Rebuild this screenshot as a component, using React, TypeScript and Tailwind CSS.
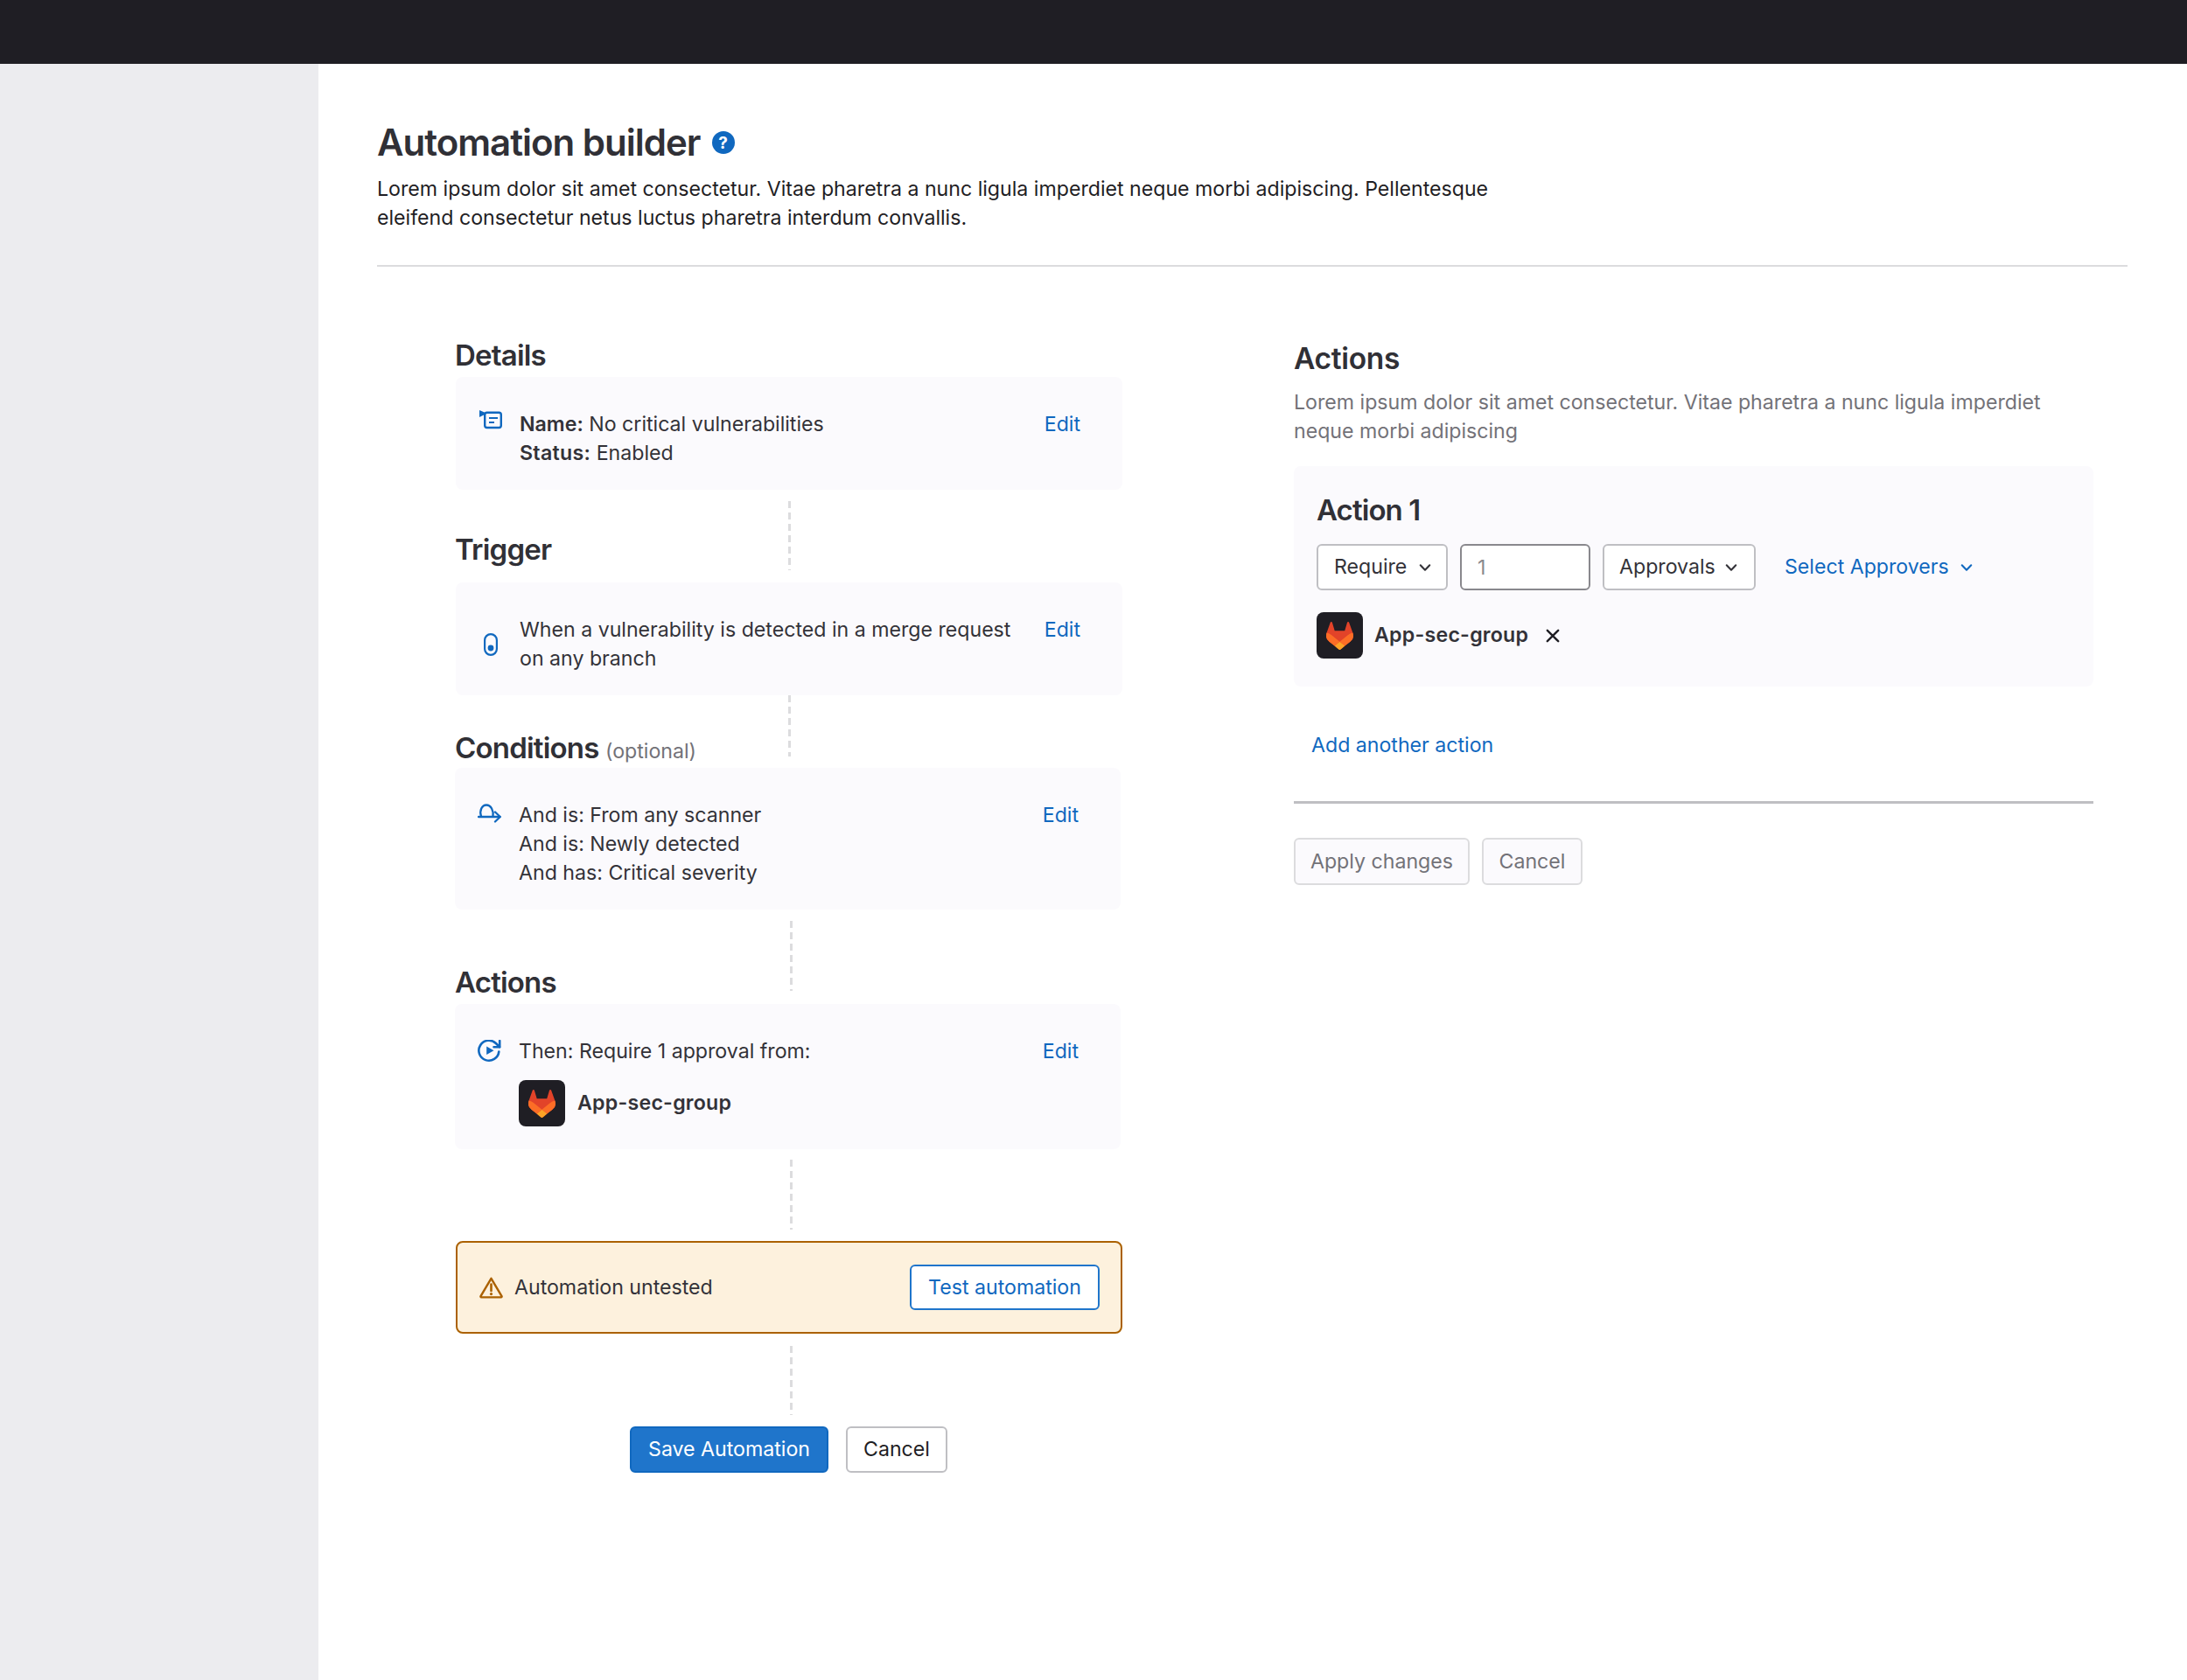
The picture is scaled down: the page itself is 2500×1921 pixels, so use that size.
import React from "react";

const BLUE = "#1068bf";

function Tanuki() {
  return (
    <svg viewBox="0 0 25 24" preserveAspectRatio="none" className="w-[31px] h-[32px]">
      <path fill="#E24329" d="m24.507 9.5-.034-.09L21.082.562a.896.896 0 0 0-1.694.091l-2.29 7.01H7.825L5.535.653a.898.898 0 0 0-1.694-.09L.451 9.411.416 9.5a6.297 6.297 0 0 0 2.09 7.278l.012.01.03.022 5.16 3.867 2.56 1.935 1.554 1.176a1.051 1.051 0 0 0 1.268 0l1.555-1.176 2.56-1.935 5.197-3.89.014-.01A6.297 6.297 0 0 0 24.507 9.5Z" />
      <path fill="#FC6D26" d="m24.507 9.5-.034-.09a11.44 11.44 0 0 0-4.56 2.051l-7.447 5.632 4.742 3.584 5.197-3.89.014-.01A6.297 6.297 0 0 0 24.507 9.5Z" />
      <path fill="#FCA326" d="m7.707 20.677 2.56 1.935 1.555 1.176a1.051 1.051 0 0 0 1.268 0l1.555-1.176 2.56-1.935-4.743-3.584-4.755 3.584Z" />
      <path fill="#FC6D26" d="M5.01 11.461a11.43 11.43 0 0 0-4.56-2.05L.416 9.5a6.297 6.297 0 0 0 2.09 7.278l.012.01.03.022 5.16 3.867 4.745-3.584-7.444-5.632Z" />
    </svg>
  );
}

function Avatar() {
  return (
    <div className="w-[53px] h-[53px] shrink-0 rounded-lg bg-[#1f1e24] flex items-center justify-center">
      <Tanuki />
    </div>
  );
}

function Chevron({ color = "#333238" }: { color?: string }) {
  return (
    <svg viewBox="0 0 16 16" className="w-[24px] h-[24px] shrink-0" fill="none" stroke={color} strokeWidth="1.4" strokeLinecap="round" strokeLinejoin="round">
      <path d="M4.5 6.2 8 9.8l3.5-3.6" />
    </svg>
  );
}

function DetailsIcon() {
  return (
    <svg viewBox="0 0 27 22" className="w-[27px] h-[22px] shrink-0" fill="none">
      <rect x="6.2" y="2.7" width="18.6" height="17.3" rx="2.5" stroke={BLUE} strokeWidth="2.4" />
      <path d="M0 0 8.6 3.8 0 8z" fill={BLUE} />
      <path d="M11 9h10M11 14h6" stroke={BLUE} strokeWidth="2.2" />
    </svg>
  );
}

function TriggerIcon() {
  return (
    <svg viewBox="0 0 16 26" className="w-[16px] h-[26px]" fill="none">
      <rect x="1.1" y="1.1" width="13.8" height="23.8" rx="6.9" stroke={BLUE} strokeWidth="2.2" />
      <circle cx="8" cy="17" r="3.4" fill={BLUE} />
    </svg>
  );
}

function ConditionsIcon() {
  return (
    <svg viewBox="0 0 27 22" className="w-[27px] h-[22px] shrink-0 mt-[3px]" fill="none" stroke={BLUE} strokeWidth="2.3" strokeLinecap="round" strokeLinejoin="round">
      <path d="M4 14.5C1.8 8 4.8 1.5 10 1.5S18.5 8 17.5 14.5" />
      <path d="M1 15h24.6" />
      <path d="M20 9.5l5.7 5.5L20 20.5" />
    </svg>
  );
}

function ActionsIcon() {
  return (
    <svg viewBox="0 0 27 26" className="w-[27px] h-[26px] shrink-0 mt-[3px]" fill="none">
      <path d="M24.3 13.5A11.5 11.5 0 1 1 20.9 4L25 8.2" stroke={BLUE} strokeWidth="2.6" strokeLinecap="round" strokeLinejoin="round" />
      <path d="M25.2 1V8.2H18.5" stroke={BLUE} strokeWidth="2.6" strokeLinecap="round" strokeLinejoin="round" />
      <path d="M10.2 7.5 18.5 12.2 10.2 16.9z" fill={BLUE} />
    </svg>
  );
}

function WarnIcon() {
  return (
    <svg viewBox="0 0 27 25" className="w-[27px] h-[25px] shrink-0" fill="none">
      <path d="M13.5 1.8 1.5 22.2a.8.8 0 0 0 .7 1.2h22.6a.8.8 0 0 0 .7-1.2z" stroke="#ab6100" strokeWidth="2.4" strokeLinejoin="round" />
      <path d="M13.5 8.5v7.5" stroke="#ab6100" strokeWidth="2.6" strokeLinecap="round" />
      <circle cx="13.5" cy="19.6" r="1.6" fill="#ab6100" />
    </svg>
  );
}

function Dash({ className }: { className: string }) {
  return (
    <div className={`col-start-1 row-start-1 self-start justify-self-start w-[3px] bg-[repeating-linear-gradient(to_bottom,#dcdcde_0px,#dcdcde_8px,transparent_8px,transparent_13px)] ${className}`} />
  );
}

function SectionTitle({ className, children }: { className: string; children: React.ReactNode }) {
  return (
    <h2 className={`col-start-1 row-start-1 self-end -ml-[1px] text-[33px] leading-[40px] font-semibold tracking-[-0.8px] text-[#303036] ${className}`}>
      {children}
    </h2>
  );
}

function EditLink({ className }: { className: string }) {
  return <a className={`text-[#1068bf] shrink-0 ${className}`}>Edit</a>;
}

export default function App() {
  return (
    <div className="w-[2500px] h-[1921px] flex flex-col bg-white text-[23.15px] leading-[33px] text-[#333238] font-['Inter','Noto_Sans',sans-serif] overflow-hidden">
      <header className="h-[73px] shrink-0 bg-[#1f1e24]" />
      <div className="flex flex-1 min-h-0">
        <aside className="w-[364px] shrink-0 bg-[#ececef]" />
        <main className="flex-1 pl-[67px] pr-[68px]">
          <div className="pt-[66px]">
            <div className="flex items-center gap-[13px] h-[48px]">
              <h1 className="text-[42px] leading-[48px] font-semibold tracking-[-1px] text-[#303036]">Automation builder</h1>
              <span className="w-[26px] h-[26px] rounded-full bg-[#1068bf] text-white flex items-center justify-center text-[19px] leading-none font-bold">?</span>
            </div>
            <p className="mt-[13px] w-[1320px] text-[#1f1e24]">
              Lorem ipsum dolor sit amet consectetur. Vitae pharetra a nunc ligula imperdiet neque morbi adipiscing. Pellentesque eleifend consectetur netus luctus pharetra interdum convallis.
            </p>
            <div className="mt-[37px] h-[2px] bg-[#dcdcde]" />
          </div>

          <div className="flex">
            {/* Left column */}
            <section className="ml-[90px] w-[762px] shrink-0">
              <div className="grid h-[126px]">
                <SectionTitle className="mb-[5px]">Details</SectionTitle>
              </div>
              <div className="flex rounded-lg bg-[#fbfafd] pl-[27px] pr-[48px] pt-[38px] pb-[25px]">
                <DetailsIcon />
                <div className="ml-[19px]">
                  <div><b className="font-semibold">Name:</b> No critical vulnerabilities</div>
                  <div><b className="font-semibold tracking-[0.3px]">Status:</b> Enabled</div>
                </div>
                <EditLink className="ml-auto" />
              </div>

              <div className="grid h-[106px]">
                <SectionTitle className="mb-[18px]">Trigger</SectionTitle>
                <Dash className="ml-[380px] mt-[13px] h-[79px]" />
              </div>
              <div className="flex rounded-lg bg-[#fbfafd] pl-[32px] pr-[48px] pt-[38px] pb-[25px]">
                <div className="shrink-0 flex items-center"><TriggerIcon /></div>
                <div className="ml-[25px] w-[575px]">When a vulnerability is detected in a merge request on any branch</div>
                <EditLink className="ml-auto" />
              </div>

              <div className="grid h-[83px]">
                <SectionTitle className="-mb-[1px]">
                  Conditions <span className="text-[23.15px] font-normal tracking-normal text-[#737278]">(optional)</span>
                </SectionTitle>
                <Dash className="ml-[380px] h-[70px]" />
              </div>
              <div className="flex rounded-lg bg-[#fbfafd] -ml-px w-[761px] pl-[26px] pr-[48px] pt-[38px] pb-[25px]">
                <ConditionsIcon />
                <div className="ml-[20px]">
                  <div>And is: From any scanner</div>
                  <div>And is: Newly detected</div>
                  <div>And has: Critical severity</div>
                </div>
                <EditLink className="ml-auto" />
              </div>

              <div className="grid h-[108px]">
                <SectionTitle className="mb-[5px]">Actions</SectionTitle>
                <Dash className="ml-[382px] mt-[13px] h-[80px]" />
              </div>
              <div className="flex rounded-lg bg-[#fbfafd] -ml-px w-[761px] pl-[26px] pr-[48px] pt-[38px] pb-[26px]">
                <ActionsIcon />
                <div className="ml-[20px]">
                  <div>Then: Require 1 approval from:</div>
                  <div className="mt-[16px] flex items-center gap-[14px]">
                    <Avatar />
                    <span className="font-semibold tracking-[0.25px]">App-sec-group</span>
                  </div>
                </div>
                <EditLink className="ml-auto" />
              </div>

              <div className="grid h-[105px]">
                <Dash className="ml-[382px] mt-[12px] h-[80px]" />
              </div>
              <div className="flex items-center h-[106px] rounded-lg border-2 border-[#ab6100] bg-[#fdf1dd] pl-[25px] pr-[24px]">
                <WarnIcon />
                <span className="ml-[13px]">Automation untested</span>
                <button className="ml-auto h-[52px] w-[217px] rounded-md border-2 border-[#1f75cb] bg-white text-[#1068bf]">Test automation</button>
              </div>

              <div className="grid h-[106px]">
                <Dash className="ml-[382px] mt-[14px] h-[79px]" />
              </div>
              <div className="flex ml-[199px] gap-[20px]">
                <button className="h-[53px] w-[227px] rounded-md border-2 border-[#1068bf] bg-[#1f75cb] text-white">Save Automation</button>
                <button className="h-[53px] w-[116px] rounded-md border-2 border-[#bfbfc3] bg-white text-[#1f1e24]">Cancel</button>
              </div>
            </section>

            {/* Right column */}
            <section className="ml-[196px] w-[914px] shrink-0 pt-[85px]">
              <h2 className="text-[33.5px] leading-[40px] font-semibold tracking-[-0.3px] text-[#303036]">Actions</h2>
              <p className="mt-[14px] text-[#737278]">
                Lorem ipsum dolor sit amet consectetur. Vitae pharetra a nunc ligula imperdiet neque morbi adipiscing
              </p>
              <div className="mt-[23px] h-[252px] rounded-lg bg-[#fbfafd] pl-[26px] pt-[30px]">
                <h3 className="text-[33px] leading-[40px] font-semibold tracking-[-0.9px] text-[#303036]">Action 1</h3>
                <div className="mt-[19px] flex items-center h-[53px]">
                  <button className="flex items-center justify-between h-[53px] w-[150px] rounded-md border-2 border-[#bfbfc3] bg-white pl-[18px] pr-[12px]">
                    Require <Chevron />
                  </button>
                  <input readOnly placeholder="1" className="ml-[14px] h-[53px] w-[149px] rounded-md border-2 border-[#89888d] bg-white px-[18px] outline-none placeholder:text-[#89888d]" />
                  <button className="ml-[14px] flex items-center justify-between h-[53px] w-[175px] rounded-md border-2 border-[#bfbfc3] bg-white pl-[17px] pr-[14px]">
                    Approvals <Chevron />
                  </button>
                  <a className="ml-[33px] flex items-center gap-[8px] text-[#1068bf]">
                    Select Approvers <Chevron color="#1068bf" />
                  </a>
                </div>
                <div className="mt-[25px] flex items-center">
                  <Avatar />
                  <span className="ml-[13px] font-semibold tracking-[0.25px]">App-sec-group</span>
                  <svg viewBox="0 0 16 16" className="ml-[17px] w-[22px] h-[22px]" fill="none" stroke="#1f1e24" strokeWidth="1.7" strokeLinecap="round">
                    <path d="M3.5 3.5l9 9M12.5 3.5l-9 9" />
                  </svg>
                </div>
              </div>
              <a className="block mt-[51px] ml-[20px] text-[#1068bf]">Add another action</a>
              <div className="mt-[47px] h-[3px] bg-[#bfbfc3]" />
              <div className="mt-[39px] flex gap-[14px]">
                <button className="h-[54px] w-[201px] rounded-md border-2 border-[#dcdcde] bg-[#fbfafd] text-[#737278]">Apply changes</button>
                <button className="h-[54px] w-[115px] rounded-md border-2 border-[#dcdcde] bg-[#fbfafd] text-[#737278]">Cancel</button>
              </div>
            </section>
          </div>
        </main>
      </div>
    </div>
  );
}
